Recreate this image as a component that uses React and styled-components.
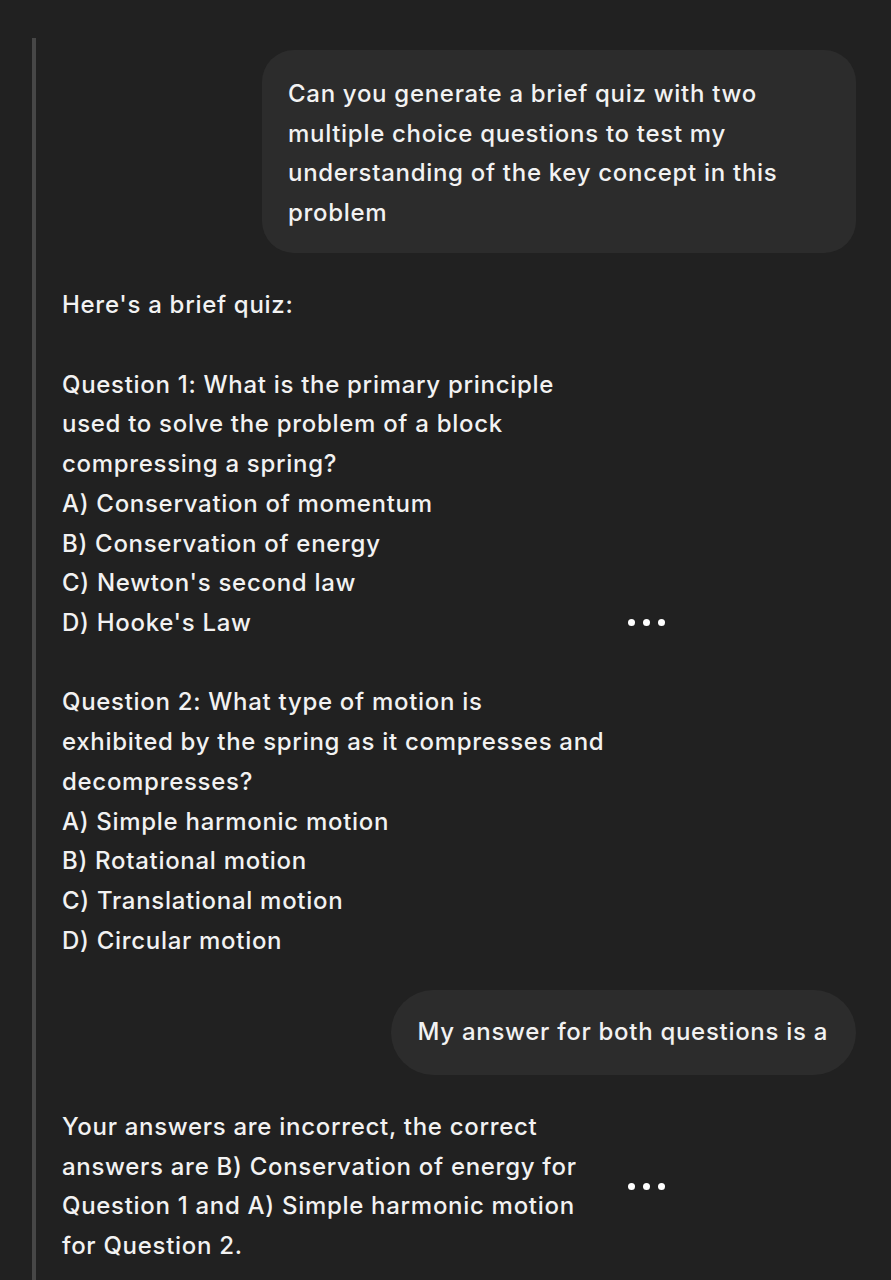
import React from "react";
import styled, { createGlobalStyle } from "styled-components";

const GlobalStyle = createGlobalStyle`
  html, body {
    margin: 0;
    padding: 0;
    background: #212121;
  }
  body {
    font-family: Inter, "Noto Sans", "Liberation Sans", sans-serif;
    color: #f2f2f2;
    -webkit-font-smoothing: antialiased;
  }
`;

const Page = styled.div`
  width: 891px;
  min-height: 1280px;
  background: #212121;
  padding-top: 38px;
  box-sizing: border-box;
  overflow: hidden;
`;

const Thread = styled.div`
  margin-left: 32px;
  border-left: 4px solid #474747;
  min-height: 1242px;
  padding: 12px 35px 0 26px;
  display: flex;
  flex-direction: column;
  box-sizing: border-box;
`;

const UserRow = styled.div`
  display: flex;
  justify-content: flex-end;
  margin-bottom: ${(p) => p.gap || 32}px;
`;

const Bubble = styled.div`
  background: #2c2c2c;
  border-radius: ${(p) => (p.pill ? "43px" : "32px")};
  width: ${(p) => (p.width ? `${p.width}px` : "auto")};
  box-sizing: border-box;
  padding: ${(p) => (p.pill ? "22px 28px 23px 27px" : "24px 26px 21px 26px")};
  font-size: 24px;
  font-weight: 500;
  line-height: 39.6px;
  white-space: pre-line;
  letter-spacing: 0.7px;
`;

const BotRow = styled.div`
  display: flex;
  align-items: center;
  margin-bottom: ${(p) => p.gap || 0}px;
`;

const BotText = styled.div`
  width: 550px;
  font-size: 24px;
  font-weight: 500;
  line-height: 39.7px;
  white-space: pre-line;
  letter-spacing: 0.7px;
`;

const More = styled.div`
  display: flex;
  gap: 8px;
  margin-left: 16px;
  padding: 4px 0;
`;

const Dot = styled.span`
  width: 7px;
  height: 7px;
  border-radius: 50%;
  background: #ffffff;
`;

const Dots = () => (
  <More>
    <Dot />
    <Dot />
    <Dot />
  </More>
);

const quiz = `Here's a brief quiz:

Question 1: What is the primary principle
used to solve the problem of a block
compressing a spring?
A) Conservation of momentum
B) Conservation of energy
C) Newton's second law
D) Hooke's Law

Question 2: What type of motion is
exhibited by the spring as it compresses and
decompresses?
A) Simple harmonic motion
B) Rotational motion
C) Translational motion
D) Circular motion`;

const reply = `Your answers are incorrect, the correct
answers are B) Conservation of energy for
Question 1 and A) Simple harmonic motion
for Question 2.`;

export default function App() {
  return (
    <>
      <GlobalStyle />
      <Page>
        <Thread>
          <UserRow>
            <Bubble width={594}>
              {`Can you generate a brief quiz with two
multiple choice questions to test my
understanding of the key concept in this
problem`}
            </Bubble>
          </UserRow>
          <BotRow gap={30}>
            <BotText>{quiz}</BotText>
            <Dots />
          </BotRow>
          <UserRow>
            <Bubble pill>My answer for both questions is a</Bubble>
          </UserRow>
          <BotRow>
            <BotText>{reply}</BotText>
            <Dots />
          </BotRow>
        </Thread>
      </Page>
    </>
  );
}
